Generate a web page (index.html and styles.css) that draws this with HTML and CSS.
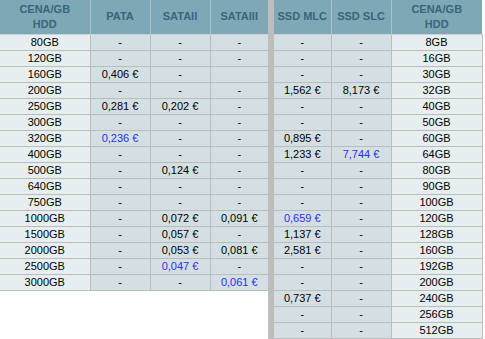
FILE: index.html
```html
<!DOCTYPE html>
<html>
<head>
<meta charset="utf-8">
<link rel="stylesheet" href="styles.css">
</head>
<body>
<div class="wrap">
  <table class="prices left">
    <colgroup><col class="c-size"><col class="c-val"><col class="c-val"><col class="c-val3"></colgroup>
    <thead>
      <tr><th>CENA/GB<br>HDD</th><th>PATA</th><th>SATAII</th><th>SATAIII</th></tr>
    </thead>
    <tbody>
      <tr><td class="size">80GB</td><td>-</td><td>-</td><td>-</td></tr>
      <tr><td class="size">120GB</td><td>-</td><td>-</td><td>-</td></tr>
      <tr><td class="size">160GB</td><td>0,406 €</td><td>-</td><td></td></tr>
      <tr><td class="size">200GB</td><td>-</td><td>-</td><td>-</td></tr>
      <tr><td class="size">250GB</td><td>0,281 €</td><td>0,202 €</td><td>-</td></tr>
      <tr><td class="size">300GB</td><td>-</td><td>-</td><td>-</td></tr>
      <tr><td class="size">320GB</td><td class="best">0,236 €</td><td>-</td><td>-</td></tr>
      <tr><td class="size">400GB</td><td>-</td><td>-</td><td>-</td></tr>
      <tr><td class="size">500GB</td><td>-</td><td>0,124 €</td><td>-</td></tr>
      <tr><td class="size">640GB</td><td>-</td><td>-</td><td>-</td></tr>
      <tr><td class="size">750GB</td><td>-</td><td>-</td><td>-</td></tr>
      <tr><td class="size">1000GB</td><td>-</td><td>0,072 €</td><td>0,091 €</td></tr>
      <tr><td class="size">1500GB</td><td>-</td><td>0,057 €</td><td>-</td></tr>
      <tr><td class="size">2000GB</td><td>-</td><td>0,053 €</td><td>0,081 €</td></tr>
      <tr><td class="size">2500GB</td><td>-</td><td class="best">0,047 €</td><td>-</td></tr>
      <tr><td class="size">3000GB</td><td>-</td><td>-</td><td class="best">0,061 €</td></tr>
    </tbody>
  </table>
  <table class="prices right">
    <colgroup><col class="c-val"><col class="c-val"><col class="c-size2"></colgroup>
    <thead>
      <tr><th>SSD MLC</th><th>SSD SLC</th><th>CENA/GB<br>HDD</th></tr>
    </thead>
    <tbody>
      <tr><td>-</td><td>-</td><td class="size">8GB</td></tr>
      <tr><td>-</td><td>-</td><td class="size">16GB</td></tr>
      <tr><td>-</td><td>-</td><td class="size">30GB</td></tr>
      <tr><td>1,562 €</td><td>8,173 €</td><td class="size">32GB</td></tr>
      <tr><td>-</td><td>-</td><td class="size">40GB</td></tr>
      <tr><td>-</td><td>-</td><td class="size">50GB</td></tr>
      <tr><td>0,895 €</td><td>-</td><td class="size">60GB</td></tr>
      <tr><td>1,233 €</td><td class="best">7,744 €</td><td class="size">64GB</td></tr>
      <tr><td>-</td><td>-</td><td class="size">80GB</td></tr>
      <tr><td>-</td><td>-</td><td class="size">90GB</td></tr>
      <tr><td>-</td><td>-</td><td class="size">100GB</td></tr>
      <tr><td class="best">0,659 €</td><td>-</td><td class="size">120GB</td></tr>
      <tr><td>1,137 €</td><td>-</td><td class="size">128GB</td></tr>
      <tr><td>2,581 €</td><td>-</td><td class="size">160GB</td></tr>
      <tr><td>-</td><td>-</td><td class="size">192GB</td></tr>
      <tr><td>-</td><td>-</td><td class="size">200GB</td></tr>
      <tr><td>0,737 €</td><td>-</td><td class="size">240GB</td></tr>
      <tr><td>-</td><td>-</td><td class="size">256GB</td></tr>
      <tr><td>-</td><td>-</td><td class="size">512GB</td></tr>
    </tbody>
  </table>
</div>
</body>
</html>
```

FILE: styles.css
```css
html, body {
  margin: 0;
  padding: 0;
  background: #ffffff;
}
body {
  font-family: "Liberation Sans", Arial, sans-serif;
  font-size: 11px;
  color: #000000;
}
.wrap {
  display: flex;
  align-items: flex-start;
  width: 485px;
  height: 339px;
}
.prices {
  border-collapse: collapse;
  table-layout: fixed;
}
.left {
  width: 268px;
}
.right {
  width: 211px;
  border-left: 6px solid #bdbdbd;
  align-self: stretch;
}
.c-size { width: 90px; }
.c-val { width: 60px; }
.c-val3 { width: 58px; }
.c-size2 { width: 91px; }
.prices th {
  background: #7fa8b7;
  color: #38657a;
  font-weight: bold;
  font-size: 11px;
  line-height: 15px;
  height: 34px;
  padding: 0;
  text-align: center;
  border-left: 1px solid #a9c2cc;
  border-bottom: 1px solid #c3d6dd;
  box-sizing: border-box;
}
.prices th:first-child { border-left: none; }
.prices td {
  background: #d3dfe3;
  height: 16px;
  padding: 0;
  line-height: 15px;
  text-align: center;
  border-left: 1px solid #bcbcbc;
  border-bottom: 1px solid #bcbcbc;
  box-sizing: border-box;
  white-space: nowrap;
}
.prices td:first-child { border-left: none; }
.prices td.size { background: #e7eef0; }
.right td:last-child { border-right: 1px solid #bcbcbc; }
.prices td.best { color: #2e2ef0; }
```
